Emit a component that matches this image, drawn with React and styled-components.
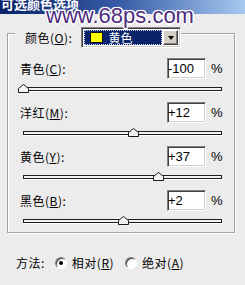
import React from "react";
import styled, { createGlobalStyle } from "styled-components";

const GlobalStyle = createGlobalStyle`
  html, body { margin: 0; padding: 0; background: #ececec; }
  body {
    width: 245px; height: 285px; overflow: hidden;
    font-family: "Noto Sans CJK SC", "Noto Sans", sans-serif;
    font-size: 12px; color: #000;
  }
  * { box-sizing: border-box; }
`;

const Window = styled.div`
  position: relative;
  width: 245px;
  height: 285px;
  background: #ececec;
  overflow: hidden;
`;

const TitleBar = styled.div`
  height: 14px;
  background: linear-gradient(to right, #0a246a 0%, #3a5ea8 50%, #a6caf0 100%);
  overflow: hidden;
  padding-left: 1px;
`;

const TitleText = styled.div`
  color: #fff;
  font-weight: bold;
  font-size: 13px;
  line-height: 13px;
  margin-top: -3px;
  white-space: nowrap;
`;

const Watermark = styled.div`
  position: absolute;
  top: 3px;
  left: 46px;
  font-family: "Liberation Sans", Arial, sans-serif;
  font-size: 22px;
  line-height: 26px;
  color: #4e2b7e;
  white-space: nowrap;
  text-shadow:
    1.5px 0 0 #fff, -1.5px 0 0 #fff, 0 1.5px 0 #fff, 0 -1.5px 0 #fff,
    1px 1px 0 #fff, -1px -1px 0 #fff, 1px -1px 0 #fff, -1px 1px 0 #fff,
    0 0 3px #b9a8d8;
`;

const GroupBox = styled.div`
  margin: 19px 0 0 7px;
  width: 228px;
  height: 200px;
  border: 1px solid #a3a3a3;
  box-shadow: inset 1px 1px 0 #fff, 1px 1px 0 #fff;
  padding: 0 12px 0 12px;
`;

const Header = styled.div`
  display: flex;
  align-items: center;
  height: 21px;
  margin-top: -7px;
`;

const HeaderLabel = styled.div`
  margin-left: -5px;
  padding: 0 9px 0 10px;
  height: 21px;
  line-height: 21px;
  background: #ececec;
  white-space: nowrap;
  letter-spacing: 0.5px;
`;

const Select = styled.div`
  display: flex;
  width: 100px;
  height: 21px;
  border: 1px solid;
  border-color: #808080 #fff #fff #808080;
  box-shadow: inset 1px 1px 0 #404040, inset -1px -1px 0 #d4d0c8;
  padding: 2px;
  background: #fff;
  gap: 1px;
`;

const Selected = styled.div`
  flex: 1;
  display: flex;
  align-items: center;
  background: #0a246a;
  border: 1px dotted #d8d8ff;
  padding-left: 5px;
  color: #fff;
`;

const Swatch = styled.div`
  width: 13px;
  height: 11px;
  background: ${(p) => p.$color};
  border: 1px solid #111;
`;

const SelectText = styled.span`
  margin-left: 5px;
  font-size: 12px;
  line-height: 13px;
`;

const ArrowButton = styled.div`
  width: 15px;
  display: flex;
  align-items: center;
  justify-content: center;
  background: #d4d0c8;
  border: 1px solid;
  border-color: #fff #404040 #404040 #fff;
  box-shadow: inset -1px -1px 0 #808080;
  &::after {
    content: "";
    border-left: 3.5px solid transparent;
    border-right: 3.5px solid transparent;
    border-top: 4px solid #000;
  }
`;

const Sections = styled.div`
  display: flex;
  flex-direction: column;
  gap: 2px;
  margin-top: 10px;
`;

const Section = styled.div`
  display: flex;
  flex-direction: column;
`;

const Row = styled.div`
  display: flex;
  align-items: center;
  height: 21px;
`;

const Label = styled.div`
  flex: 1;
  white-space: nowrap;
  letter-spacing: 0.5px;
  line-height: 21px;
`;

const ValueBox = styled.div`
  width: 39px;
  height: 21px;
  background: #fff;
  border: 1px solid;
  border-color: #808080 #fff #fff #808080;
  box-shadow: inset 1px 1px 0 #404040, inset -1px -1px 0 #d4d0c8;
  font-family: "Liberation Sans", Arial, sans-serif;
  font-size: 13px;
  line-height: 19px;
`;

const Percent = styled.div`
  width: 16px;
  padding-left: 5px;
  font-family: "Liberation Sans", Arial, sans-serif;
  font-size: 13px;
`;

const SliderWrap = styled.div`
  position: relative;
  margin-top: 8px;
  height: 13px;
`;

const Track = styled.div`
  margin-left: 3px;
  height: 4px;
  border: 1px solid #1e1e1e;
  background: #f2f2f2;
  box-shadow: 0 1px 0 #fff;
`;

const Thumb = styled.svg`
  position: absolute;
  top: -3px;
  width: 11px;
  height: 9px;
`;

const MethodRow = styled.div`
  display: flex;
  align-items: center;
  height: 21px;
  margin-top: 19px;
  padding-left: 16px;
`;

const MethodLabel = styled.span`
  margin-right: 6px;
  letter-spacing: 0.5px;
`;

const RadioItem = styled.label`
  display: flex;
  align-items: center;
  margin-left: ${(p) => p.$gap}px;
  letter-spacing: 0.5px;
`;

const RadioCircle = styled.span`
  position: relative;
  width: 12px;
  height: 12px;
  border-radius: 50%;
  border: 1px solid;
  border-color: #808080 #fff #fff #808080;
  box-shadow: inset 1px 1px 0 #404040;
  background: #fff;
  margin-right: 5px;
  &::after {
    content: "";
    display: ${(p) => (p.$checked ? "block" : "none")};
    position: absolute;
    left: 3px;
    top: 3px;
    width: 4px;
    height: 4px;
    border-radius: 50%;
    background: #000;
  }
`;

const sliders = [
  { name: "青色", key: "C", value: -100 },
  { name: "洋红", key: "M", value: 12 },
  { name: "黄色", key: "Y", value: 37 },
  { name: "黑色", key: "B", value: 2 },
];

const fmt = (v) => (v > 0 ? `+${v}` : `${v}`);

function Slider({ value }) {
  const center = 3 + ((value + 100) / 200) * 198;
  return (
    <SliderWrap>
      <Track />
      <Thumb viewBox="0 0 11 9" style={{ left: `${center - 5.5}px` }}>
        <polygon
          points="0.5,8.5 0.5,4.5 5.5,0.5 10.5,4.5 10.5,8.5"
          fill="#f4f4f4"
          stroke="#1a1a1a"
          strokeWidth="1"
        />
      </Thumb>
    </SliderWrap>
  );
}

export default function App() {
  return (
    <Window>
      <GlobalStyle />
      <TitleBar>
        <TitleText>可选颜色选项</TitleText>
      </TitleBar>
      <Watermark>www.68ps.com</Watermark>
      <GroupBox>
        <Header>
          <HeaderLabel>
            颜色(<u>O</u>):
          </HeaderLabel>
          <Select>
            <Selected>
              <Swatch $color="#ffff00" />
              <SelectText>黄色</SelectText>
            </Selected>
            <ArrowButton />
          </Select>
        </Header>
        <Sections>
          {sliders.map((s) => (
            <Section key={s.key}>
              <Row>
                <Label>
                  {s.name}(<u>{s.key}</u>):
                </Label>
                <ValueBox>{fmt(s.value)}</ValueBox>
                <Percent>%</Percent>
              </Row>
              <Slider value={s.value} />
            </Section>
          ))}
        </Sections>
      </GroupBox>
      <MethodRow>
        <MethodLabel>方法:</MethodLabel>
        <RadioItem $gap={4}>
          <RadioCircle $checked />
          相对(<u>R</u>)
        </RadioItem>
        <RadioItem $gap={11}>
          <RadioCircle />
          绝对(<u>A</u>)
        </RadioItem>
      </MethodRow>
    </Window>
  );
}
